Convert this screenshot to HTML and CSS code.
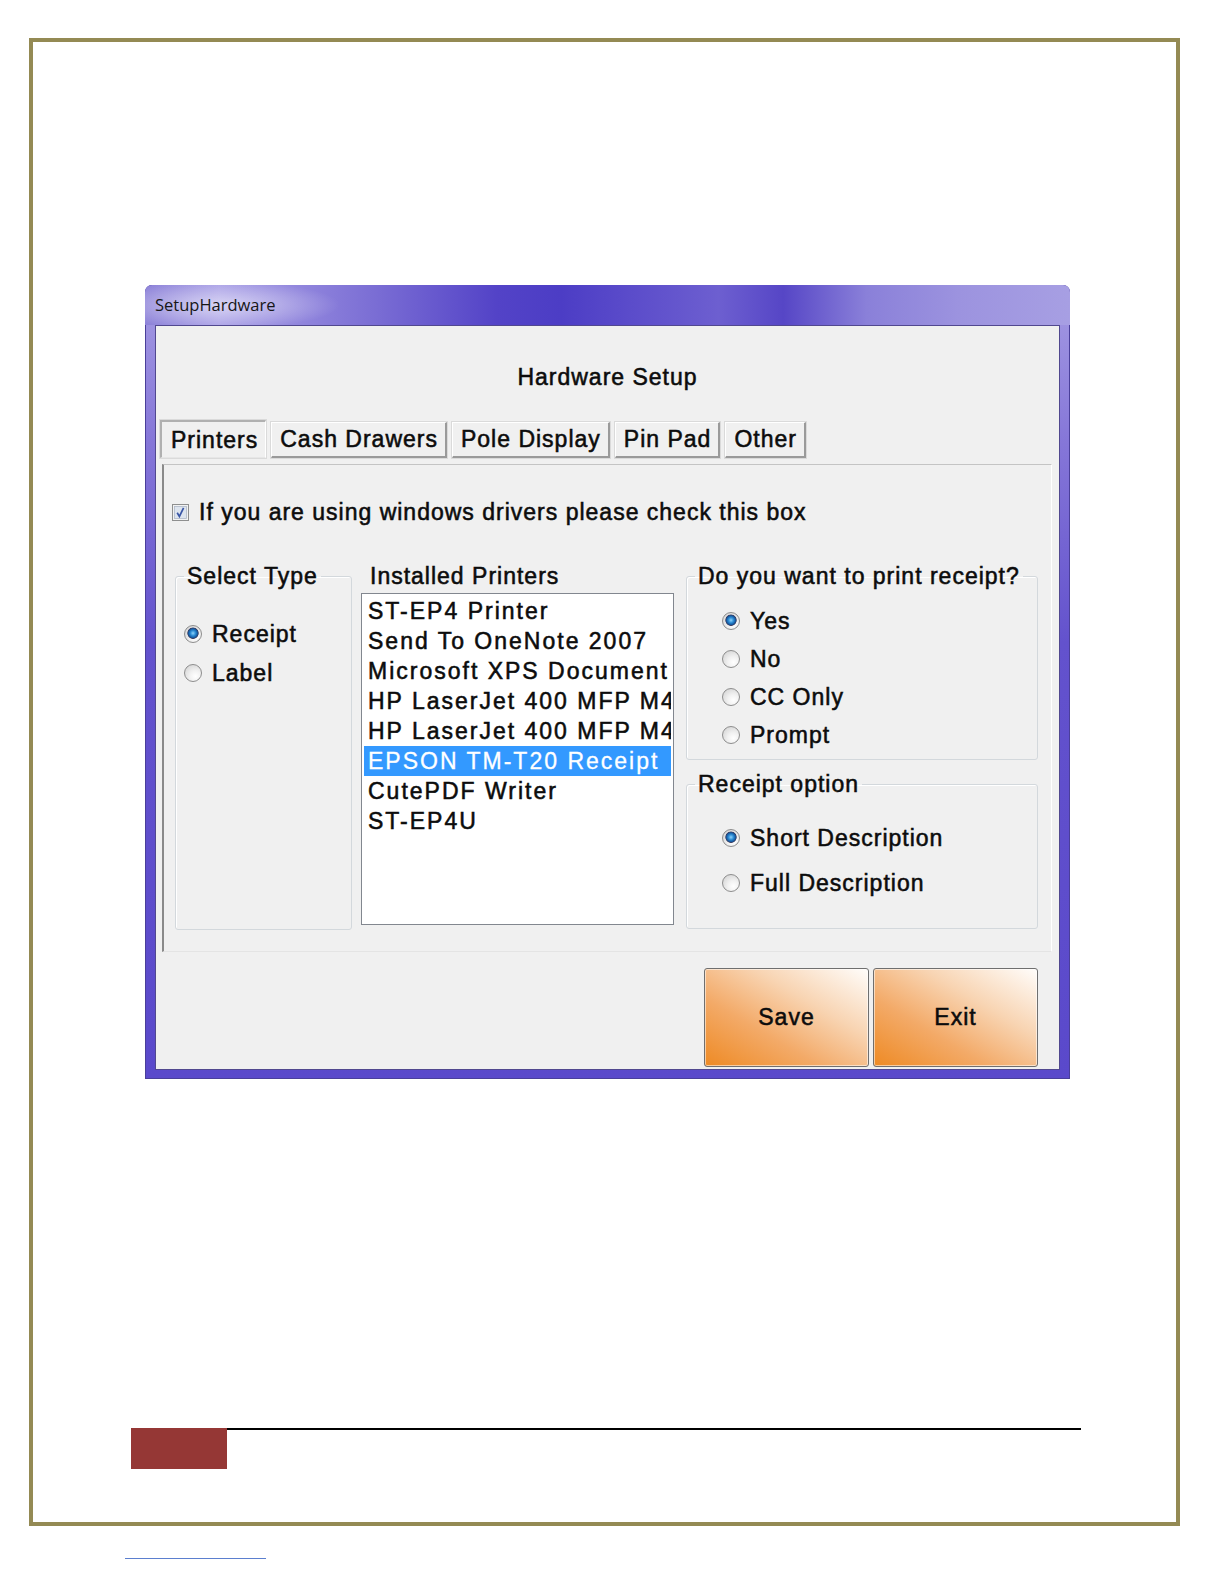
FILE: index.html
```html
<!DOCTYPE html>
<html lang="en">
<head>
    <meta charset="UTF-8">
    <title>SetupHardware</title>
    <link rel="stylesheet" href="styles.css">
</head>
<body>
    <div class="page">
        <div class="window">
            <div class="titlebar">SetupHardware</div>
            <div class="client">
                <div class="heading">Hardware Setup</div>

                <div class="tabs">
                    <div class="tab active">Printers</div>
                    <div class="tab">Cash Drawers</div>
                    <div class="tab">Pole Display</div>
                    <div class="tab">Pin Pad</div>
                    <div class="tab">Other</div>
                </div>

                <div class="tab-panel">
                    <div class="check-row">
                        <svg class="checkbox" width="17" height="17" viewBox="0 0 17 17">
                            <rect x="0.5" y="0.5" width="16" height="16" fill="#f2f2f2" stroke="#8e8f8f"/>
                            <rect x="2.5" y="2.5" width="12" height="12" fill="#dde4ee" stroke="#aeb9c8" stroke-width="0.8"/>
                            <path d="M5.2 8.8 L7.4 12.4 L11.6 3.8" fill="none" stroke="#3a56a6" stroke-width="1.7"/>
                        </svg>
                        <span>If you are using windows drivers please check this box</span>
                    </div>

                    <div class="columns">
                        <fieldset class="group type-group">
                            <legend>Select Type</legend>
                            <div class="option"><span class="radio checked"></span>Receipt</div>
                            <div class="option"><span class="radio"></span>Label</div>
                        </fieldset>

                        <div class="printers">
                            <div class="list-label">Installed Printers</div>
                            <div class="listbox">
                                <div class="item">ST-EP4 Printer</div>
                                <div class="item">Send To OneNote 2007</div>
                                <div class="item">Microsoft XPS Document</div>
                                <div class="item">HP LaserJet 400 MFP M4</div>
                                <div class="item">HP LaserJet 400 MFP M4</div>
                                <div class="item selected">EPSON TM-T20 Receipt</div>
                                <div class="item">CutePDF Writer</div>
                                <div class="item">ST-EP4U</div>
                            </div>
                        </div>

                        <div class="right-col">
                            <fieldset class="group print-group">
                                <legend>Do you want to print receipt?</legend>
                                <div class="option"><span class="radio checked"></span>Yes</div>
                                <div class="option"><span class="radio"></span>No</div>
                                <div class="option"><span class="radio"></span>CC Only</div>
                                <div class="option"><span class="radio"></span>Prompt</div>
                            </fieldset>
                            <fieldset class="group option-group">
                                <legend>Receipt option</legend>
                                <div class="option"><span class="radio checked"></span>Short Description</div>
                                <div class="option"><span class="radio"></span>Full Description</div>
                            </fieldset>
                        </div>
                    </div>
                </div>

                <div class="actions">
                    <button class="btn">Save</button>
                    <button class="btn">Exit</button>
                </div>
            </div>
        </div>

        <div class="footer">
            <div class="footer-block"></div>
            <div class="footer-line"></div>
        </div>
    </div>
    <div class="page-link"></div>
</body>
</html>
```

FILE: styles.css
```css
* {
    box-sizing: border-box;
}

body {
    margin: 0;
    background-color: #fff;
    font-family: "Liberation Sans", Arial, sans-serif;
}

.page {
    width: 1151px;
    height: 1488px;
    margin: 38px 0 0 29px;
    border: 4px solid #948a54;
    padding: 243px 0 0 112px;
    display: flex;
    flex-direction: column;
}

/* dialog window */
.window {
    width: 925px;
    height: 794px;
    display: flex;
    flex-direction: column;
    border-radius: 7px 7px 0 0;
    background: linear-gradient(180deg, #a59be3 0%, #8576d8 20%, #6352cd 45%, #5a49cb 100%);
    box-shadow: inset 0 0 0 1px #4a3f9a;
}

.titlebar {
    height: 40px;
    padding-left: 10px;
    line-height: 40px;
    font-family: "Open Sans", "Noto Sans", sans-serif;
    font-size: 16.5px;
    color: #161616;
    border-radius: 7px 7px 0 0;
    background:
        radial-gradient(ellipse 120px 24px at 75px 20px, rgba(255, 255, 255, 0.55), rgba(255, 255, 255, 0) 100%),
        linear-gradient(90deg, #8c81d8 0%, #a9a0e6 8%, #7a6dd4 25%, #5343c7 38%, #4c3dc5 45%, #5a4bca 52%, #6d5fd0 62%, #5646c6 69%, #8a80d9 78%, #9c93df 88%, #a79fe3 100%);
}

.client {
    flex: 1;
    margin: 0 10px 9px;
    border: 1px solid #51488f;
    background-color: #f0f0f0;
    color: #0c0c0c;
    font-size: 23px;
    letter-spacing: 1px;
    -webkit-text-stroke: 0.55px #0c0c0c;
    display: flex;
    flex-direction: column;
}

.heading {
    margin-top: 38px;
    height: 26px;
    line-height: 26px;
    text-align: center;
}

/* tabs */
.tabs {
    display: flex;
    align-items: flex-end;
    gap: 5px;
    margin: 30px 0 0 4px;
    height: 38px;
}

.tab {
    height: 36px;
    line-height: 33px;
    padding: 0 7px 0 8px;
    background-color: #f0f0f0;
    border-style: solid;
    border-width: 1px 2px 2px 1px;
    border-color: #fff #9a9a9a #9a9a9a #fff;
    box-shadow: 0 0 0 1px #dadada;
}

.tab.active {
    height: 38px;
    line-height: 37px;
    padding: 0 7px 0 9px;
    border-width: 2px 1px 1px 2px;
    border-color: #b0b0b0 #fff #e6e6e6 #b0b0b0;
}

.tab-panel {
    margin: 6px 7px 0 6px;
    height: 488px;
    border-top: 1px solid #c4c4c4;
    border-left: 2px solid #8a8a8a;
    border-right: 1px solid #fff;
    border-bottom: 1px solid #e4e4e4;
    padding: 34px 13px 0 8px;
}

.check-row {
    display: flex;
    align-items: center;
    gap: 10px;
    height: 26px;
}

.checkbox {
    flex: none;
}

.columns {
    display: flex;
    margin-top: 38px;
    padding-left: 3px;
}

/* group boxes */
.group {
    margin: 0;
    min-width: 0;
    padding: 0 8px;
    border: 1px solid #d3d8dc;
    border-radius: 3px;
    box-shadow: inset 1px 1px 0 #fff;
}

.group legend {
    padding: 0 3px;
    line-height: 26px;
    white-space: nowrap;
}

.option {
    display: flex;
    align-items: center;
    gap: 10px;
    height: 26px;
    white-space: nowrap;
}

.radio {
    flex: none;
    width: 18px;
    height: 18px;
    border-radius: 50%;
    border: 1px solid #8d8d8d;
    background: radial-gradient(circle at 65% 70%, #fff 0, #f2f2f2 35%, #cdcdcd 100%);
}

.radio.checked {
    background:
        radial-gradient(circle at 50% 45%, #8fd3fa 0, #2f8ed6 2.5px, #15589e 4.5px, #3b3f63 5.3px, rgba(0, 0, 0, 0) 6px),
        radial-gradient(circle at 65% 70%, #fff 0, #f2f2f2 35%, #cdcdcd 100%);
}

.type-group {
    width: 177px;
    height: 367px;
    padding-top: 32px;
}

.type-group .option + .option {
    margin-top: 13px;
}

.printers {
    width: 313px;
    margin-left: 9px;
}

.list-label {
    height: 26px;
    line-height: 26px;
    padding-left: 9px;
}

.listbox {
    margin-top: 4px;
    height: 332px;
    border: 1px solid #82878f;
    background-color: #fff;
    padding: 2px;
    overflow: hidden;
    letter-spacing: 2px;
}

.listbox .item {
    height: 30px;
    line-height: 30px;
    padding-left: 4px;
    white-space: nowrap;
    overflow: hidden;
}

.listbox .item.selected {
    background-color: #3399ff;
    color: #fff;
    -webkit-text-stroke: 0.3px #fff;
}

.right-col {
    width: 352px;
    margin-left: 12px;
    display: flex;
    flex-direction: column;
}

.print-group {
    padding: 19px 8px 11px 8px;
}

.print-group .option,
.option-group .option {
    margin-left: 27px;
}

.print-group .option + .option {
    margin-top: 12px;
}

.option-group {
    margin-top: 11px;
    padding: 28px 8px 32px 8px;
}

.option-group .option + .option {
    margin-top: 19px;
}

/* bottom buttons */
.actions {
    display: flex;
    justify-content: flex-end;
    gap: 4px;
    margin-top: 16px;
    padding-right: 21px;
}

.btn {
    width: 165px;
    height: 99px;
    border: 1px solid #6f6f6f;
    border-radius: 3px;
    background: linear-gradient(to top right, #ee8a24 0%, #f3aa68 35%, #f8d4b2 65%, #fffdfb 100%);
    box-shadow: inset 0 0 0 1px rgba(255, 255, 255, 0.55);
    font-family: "Liberation Sans", Arial, sans-serif;
    font-size: 23px;
    letter-spacing: 1px;
    color: #0c0c0c;
    -webkit-text-stroke: 0.55px #0c0c0c;
    cursor: pointer;
}

/* page footer */
.footer {
    display: flex;
    align-items: flex-start;
    width: 950px;
    margin: 349px 0 0 -14px;
}

.footer-block {
    width: 96px;
    height: 41px;
    background-color: #953735;
}

.footer-line {
    flex: 1;
    height: 1.5px;
    background-color: #000;
}

.page-link {
    width: 141px;
    height: 1px;
    margin: 32px 0 0 125px;
    background-color: #5b7fcf;
}
```
